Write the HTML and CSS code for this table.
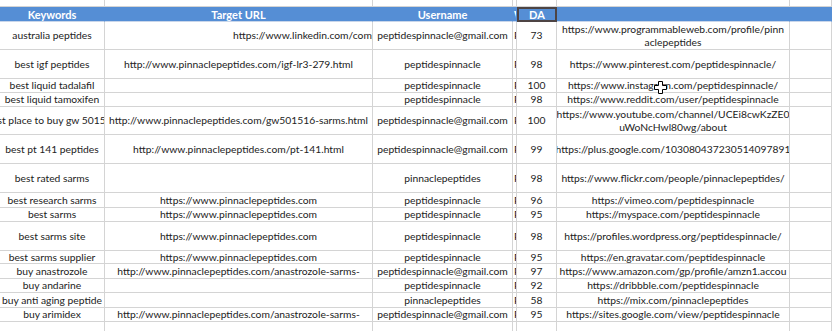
FILE: index.html
```html
<!DOCTYPE html>
<html>
<head>
<meta charset="utf-8">
<link rel="stylesheet" href="styles.css">
</head>
<body>
<div class="sheet">
  <div class="row r-top"><div class="c"></div><div class="c"></div><div class="c"></div><div class="c"></div><div class="c"></div><div class="c"></div><div class="c"></div></div>
  <div class="row r-hd hd"><div class="c">Keywords</div><div class="c">Target URL</div><div class="c">Username</div><div class="c narrow">W</div><div class="c sel">DA</div><div class="c"></div><div class="c"></div></div>

  <div class="row d28"><div class="c">australia peptides</div><div class="c indent"><span>https://www.linkedin.com/company/peptidespinnacle</span></div><div class="c">peptidespinnacle@gmail.com</div><div class="c narrow">P</div><div class="c">73</div><div class="c wrap">https://www.programmableweb.com/profile/pinn<br>aclepeptides</div><div class="c"></div></div>
  <div class="row d29"><div class="c">best igf peptides</div><div class="c">http://www.pinnaclepeptides.com/igf-lr3-279.html</div><div class="c">peptidespinnacle</div><div class="c narrow">P</div><div class="c">98</div><div class="c">https://www.pinterest.com/peptidespinnacle/</div><div class="c"></div></div>
  <div class="row s14"><div class="c">best liquid tadalafil</div><div class="c"></div><div class="c">peptidespinnacle</div><div class="c narrow">P</div><div class="c">100</div><div class="c">https://www.instagram.com/peptidespinnacle/</div><div class="c"></div></div>
  <div class="row s14"><div class="c">best liquid tamoxifen</div><div class="c"></div><div class="c">peptidespinnacle</div><div class="c narrow">P</div><div class="c">98</div><div class="c">https://www.reddit.com/user/peptidespinnacle</div><div class="c"></div></div>
  <div class="row d28"><div class="c">best place to buy gw 501516</div><div class="c">http://www.pinnaclepeptides.com/gw501516-sarms.html</div><div class="c">peptidespinnacle@gmail.com</div><div class="c narrow">P</div><div class="c">100</div><div class="c wrap">https://www.youtube.com/channel/UCEi8cwKzZE0<br>uWoNcHwl80wg/about</div><div class="c"></div></div>
  <div class="row d29"><div class="c">best pt 141 peptides</div><div class="c">http://www.pinnaclepeptides.com/pt-141.html</div><div class="c">peptidespinnacle@gmail.com</div><div class="c narrow">P</div><div class="c">99</div><div class="c">https://plus.google.com/103080437230514097891</div><div class="c"></div></div>
  <div class="row d29"><div class="c">best rated sarms</div><div class="c"></div><div class="c">pinnaclepeptides</div><div class="c narrow">P</div><div class="c">98</div><div class="c">https://www.flickr.com/people/pinnaclepeptides/</div><div class="c"></div></div>
  <div class="row s15"><div class="c">best research sarms</div><div class="c">https://www.pinnaclepeptides.com</div><div class="c">peptidespinnacle</div><div class="c narrow">P</div><div class="c">96</div><div class="c">https://vimeo.com/peptidespinnacle</div><div class="c"></div></div>
  <div class="row s14"><div class="c">best sarms</div><div class="c">https://www.pinnaclepeptides.com</div><div class="c">peptidespinnacle</div><div class="c narrow">P</div><div class="c">95</div><div class="c">https://myspace.com/peptidespinnacle</div><div class="c"></div></div>
  <div class="row d29"><div class="c">best sarms site</div><div class="c">https://www.pinnaclepeptides.com</div><div class="c">peptidespinnacle</div><div class="c narrow">P</div><div class="c">98</div><div class="c">https://profiles.wordpress.org/peptidespinnacle/</div><div class="c"></div></div>
  <div class="row s13"><div class="c">best sarms supplier</div><div class="c">https://www.pinnaclepeptides.com</div><div class="c">peptidespinnacle</div><div class="c narrow">P</div><div class="c">95</div><div class="c">https://en.gravatar.com/peptidespinnacle</div><div class="c"></div></div>
  <div class="row s15"><div class="c">buy anastrozole</div><div class="c">http://www.pinnaclepeptides.com/anastrozole-sarms-</div><div class="c">peptidespinnacle@gmail.com</div><div class="c narrow">P</div><div class="c">97</div><div class="c">https://www.amazon.com/gp/profile/amzn1.accou</div><div class="c"></div></div>
  <div class="row s14"><div class="c">buy andarine</div><div class="c"></div><div class="c">peptidespinnacle</div><div class="c narrow">P</div><div class="c">92</div><div class="c">https://dribbble.com/peptidespinnacle</div><div class="c"></div></div>
  <div class="row s15"><div class="c">buy anti aging peptide</div><div class="c"></div><div class="c">pinnaclepeptides</div><div class="c narrow">P</div><div class="c">58</div><div class="c">https://mix.com/pinnaclepeptides</div><div class="c"></div></div>
  <div class="row s14"><div class="c">buy arimidex</div><div class="c">http://www.pinnaclepeptides.com/anastrozole-sarms-</div><div class="c">peptidespinnacle@gmail.com</div><div class="c narrow">P</div><div class="c">95</div><div class="c">https://sites.google.com/view/peptidespinnacle</div><div class="c"></div></div>
  <div class="row r-end"><div class="c"></div><div class="c"></div><div class="c"></div><div class="c"></div><div class="c"></div><div class="c"></div><div class="c"></div></div>

  <svg class="cursor" width="13" height="13" viewBox="0 0 13 13" aria-hidden="true">
    <path d="M4.5 0.5 H8.5 V4.5 H12.5 V8.5 H8.5 V12.5 H4.5 V8.5 H0.5 V4.5 H4.5 Z" fill="#fff" stroke="#000" stroke-width="1"/>
  </svg>
</div>
</body>
</html>
```

FILE: styles.css
```css
html, body {
  margin: 0;
  padding: 0;
  background: #fff;
}

.sheet {
  position: relative;
  width: 832px;
  height: 331px;
  overflow: hidden;
  font-family: Lato, "Liberation Sans", sans-serif;
  font-size: 10.3px;
  color: #222;
}

.row {
  display: grid;
  grid-template-columns: 105px 268px 140px 4px 40px 233px 1fr;
}

.r-top { height: 7px; }
.r-hd { height: 15px; }
.d28 { height: 28px; }
.d29 { height: 29px; }
.s13 { height: 13px; }
.s14 { height: 14px; }
.s15 { height: 15px; }
.r-end { height: 20px; }

.c {
  box-sizing: border-box;
  display: flex;
  align-items: center;
  justify-content: center;
  overflow: hidden;
  white-space: nowrap;
  border-right: 1px solid #d4d4d4;
  border-bottom: 1px solid #d4d4d4;
  line-height: 13px;
}

.wrap {
  text-align: center;
}

.indent {
  justify-content: flex-start;
  padding-left: 128px;
}

.narrow {
  justify-content: flex-start;
  padding-left: 1px;
}

.hd {
  background: #558ed5;
  font-size: 11px;
}

.hd .c {
  color: #fff;
  font-weight: 700;
  border-right-color: #558ed5;
  border-bottom-color: #c9d6ea;
}

.hd .sel {
  border: 2px solid #4d4444;
}

.cursor {
  position: absolute;
  left: 654px;
  top: 81px;
}
```
